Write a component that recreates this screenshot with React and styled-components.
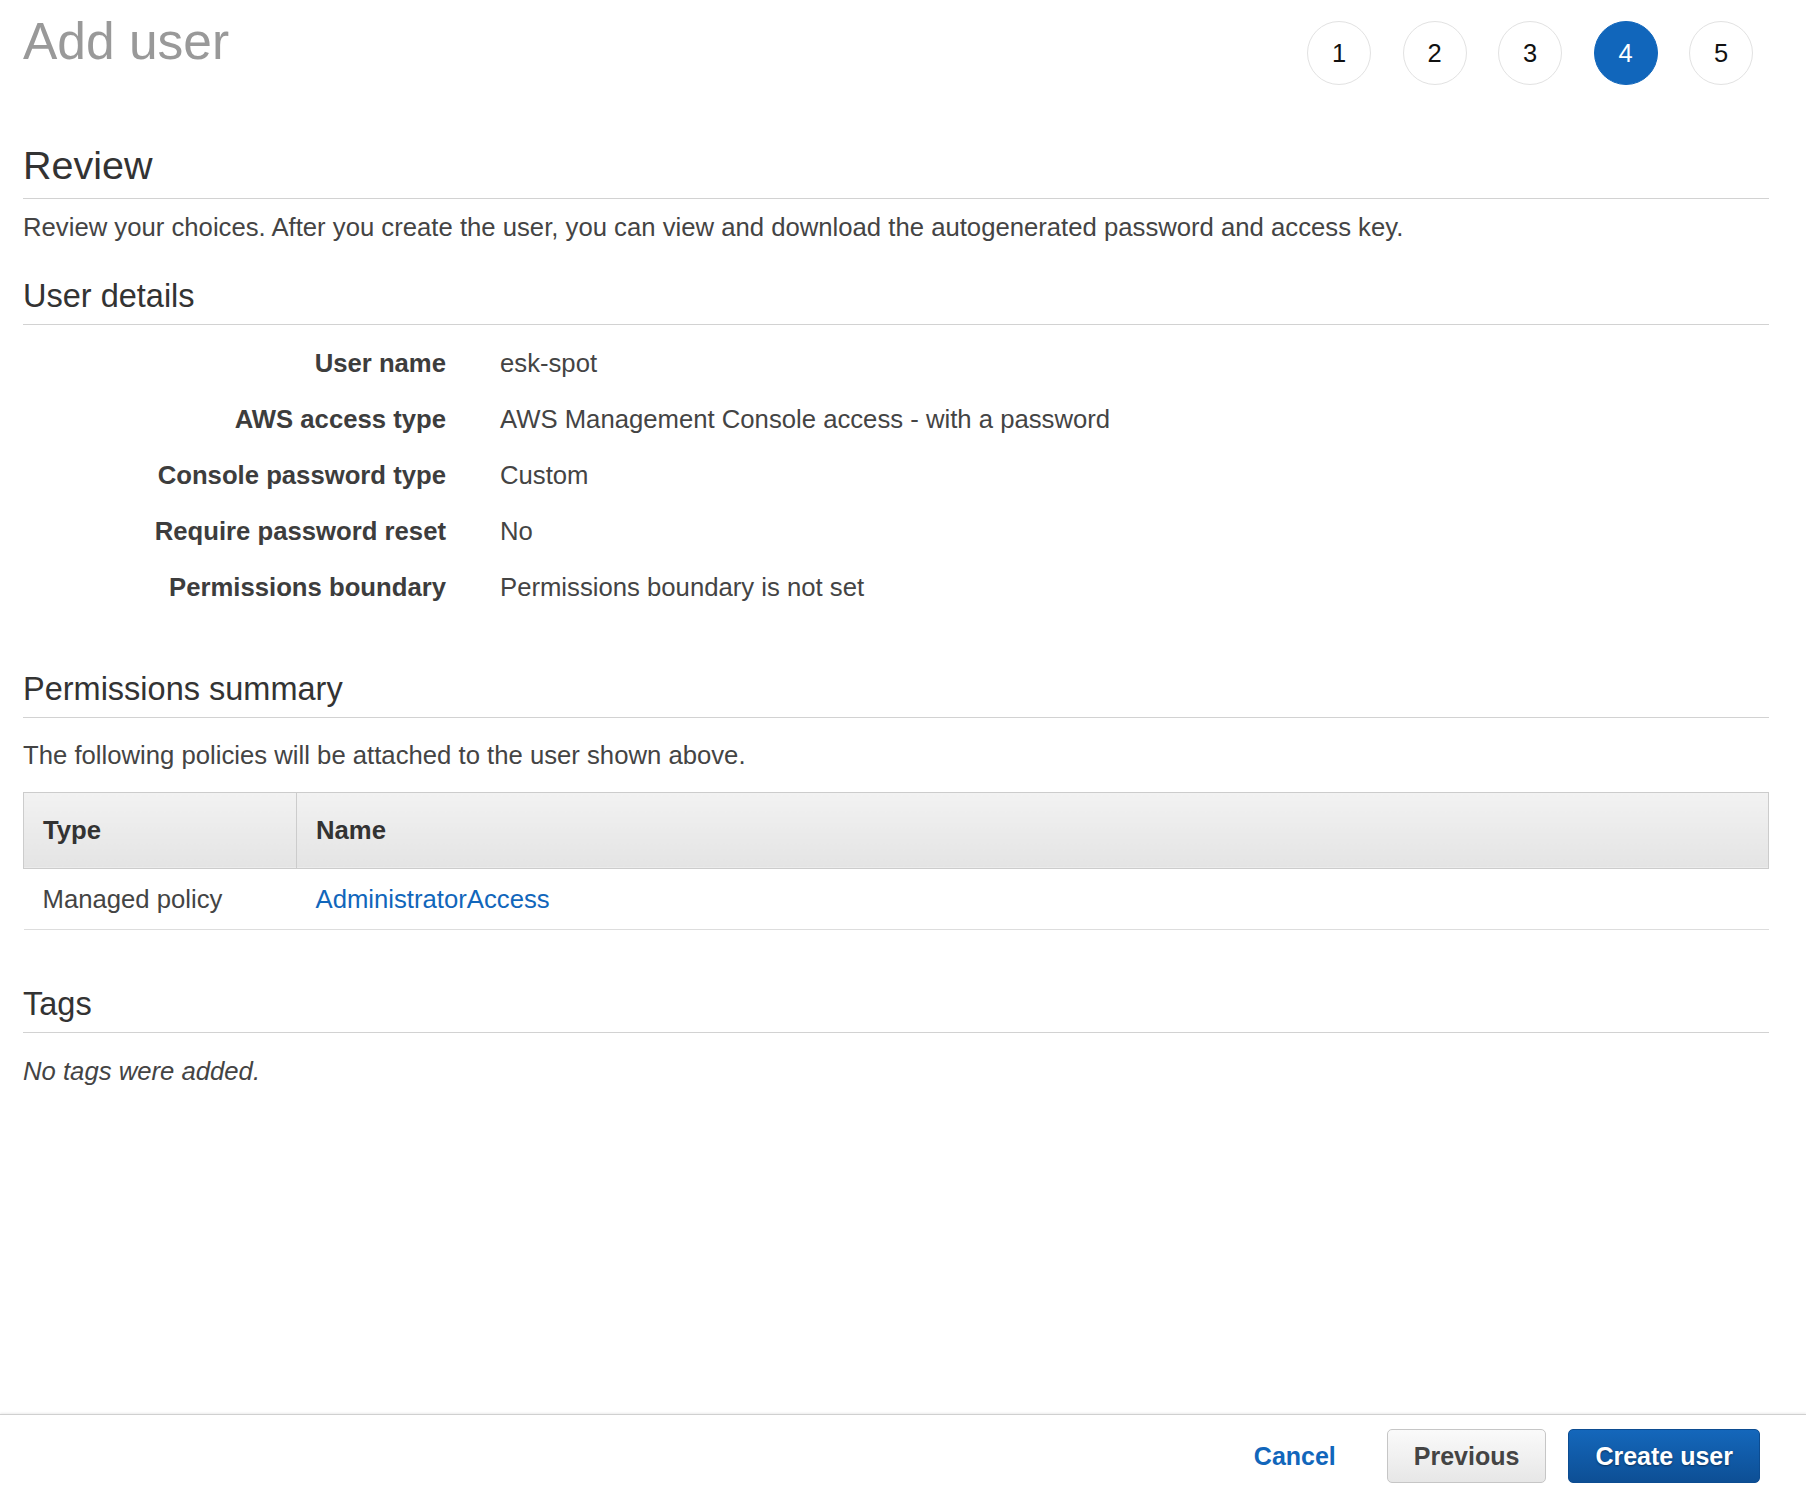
import React from 'react';
import styled, { createGlobalStyle } from 'styled-components';

const GlobalStyle = createGlobalStyle`
  html, body {
    margin: 0;
    padding: 0;
    background: #fff;
  }
  body {
    font-family: "Liberation Sans", Arial, Helvetica, sans-serif;
    color: #444;
  }
  * {
    box-sizing: border-box;
  }
`;

const steps = [1, 2, 3, 4, 5];
const current = 4;

const details = [
  ['User name', 'esk-spot'],
  ['AWS access type', 'AWS Management Console access - with a password'],
  ['Console password type', 'Custom'],
  ['Require password reset', 'No'],
  ['Permissions boundary', 'Permissions boundary is not set'],
];

const App = () => {
  return (
    <Page>
      <GlobalStyle />
      <Main>
        <Header>
          <Title>Add user</Title>
          <Steps>
            {steps.map((n) => (
              <Step key={n} $active={n === current}>{n}</Step>
            ))}
          </Steps>
        </Header>

        <SectionTitle $large $top={57}>Review</SectionTitle>
        <Text $top={10}>
          Review your choices. After you create the user, you can view and download the autogenerated password and access key.
        </Text>

        <SectionTitle $top={31}>User details</SectionTitle>
        <Details>
          {details.map(([label, value]) => (
            <React.Fragment key={label}>
              <Label>{label}</Label>
              <Value>{value}</Value>
            </React.Fragment>
          ))}
        </Details>

        <SectionTitle $top={54}>Permissions summary</SectionTitle>
        <Text $top={19}>The following policies will be attached to the user shown above.</Text>
        <Table>
          <thead>
            <tr>
              <Th $first>Type</Th>
              <Th>Name</Th>
            </tr>
          </thead>
          <tbody>
            <tr>
              <Td>Managed policy</Td>
              <Td><PolicyLink href="#">AdministratorAccess</PolicyLink></Td>
            </tr>
          </tbody>
        </Table>

        <SectionTitle $top={54}>Tags</SectionTitle>
        <Text $top={20} $italic>No tags were added.</Text>
      </Main>

      <Footer>
        <Button $variant="link">Cancel</Button>
        <Button>Previous</Button>
        <Button $variant="primary">Create user</Button>
      </Footer>
    </Page>
  );
};

const Page = styled.div`
  min-height: 100vh;
  display: flex;
  flex-direction: column;
`;

const Main = styled.main`
  flex: 1;
  padding: 0 37px 0 23px;
`;

const Header = styled.header`
  display: flex;
  justify-content: space-between;
  align-items: flex-start;
`;

const Title = styled.h1`
  margin: 11px 0 0;
  font-size: 51.5px;
  line-height: 60px;
  font-weight: 400;
  color: #999;
`;

const Steps = styled.ol`
  list-style: none;
  margin: 21px 16px 0 0;
  padding: 0;
  display: flex;
  gap: 31.5px;
`;

const Step = styled.li`
  width: 64px;
  height: 64px;
  border-radius: 50%;
  display: flex;
  align-items: center;
  justify-content: center;
  border: 1.5px solid ${({ $active }) => ($active ? '#1166bb' : '#e2e2e2')};
  background: ${({ $active }) => ($active ? '#1166bb' : '#fff')};
  color: ${({ $active }) => ($active ? '#fff' : '#111')};
  font-size: 25.5px;
`;

const SectionTitle = styled.h2`
  margin: ${({ $top }) => $top}px 0 0;
  padding-bottom: ${({ $large }) => ($large ? '9.5px' : '8px')};
  font-size: ${({ $large }) => ($large ? '39.5px' : '32.5px')};
  line-height: ${({ $large }) => ($large ? '46px' : '40px')};
  font-weight: 400;
  color: #333;
  border-bottom: 1px solid #d2d2d2;
`;

const Text = styled.p`
  margin: ${({ $top }) => $top}px 0 0;
  font-size: 25.7px;
  line-height: 36px;
  color: #444;
  font-style: ${({ $italic }) => ($italic ? 'italic' : 'normal')};
`;

const Details = styled.dl`
  margin: 10px 0 0;
  display: grid;
  grid-template-columns: 423px 1fr;
  column-gap: 54px;
  font-size: 25.7px;
  line-height: 36px;
`;

const Label = styled.dt`
  padding: 10px 0;
  text-align: right;
  font-weight: 700;
  color: #3d3d3d;
`;

const Value = styled.dd`
  margin: 0;
  padding: 10px 0;
  color: #444;
`;

const Table = styled.table`
  margin-top: 19px;
  width: 100%;
  border-collapse: collapse;
  font-size: 25.7px;
  line-height: 36px;
  color: #444;
`;

const Th = styled.th`
  width: ${({ $first }) => ($first ? '273px' : 'auto')};
  height: 76px;
  padding: 0 19px;
  text-align: left;
  font-weight: 700;
  color: #333;
  background: linear-gradient(#f2f2f2, #e4e4e4);
  border: 1px solid #cccccc;
`;

const Td = styled.td`
  height: 61px;
  padding: 0 19px;
  border-bottom: 1px solid #dddddd;
`;

const PolicyLink = styled.a`
  color: #1166bb;
  text-decoration: none;
`;

const Footer = styled.footer`
  display: flex;
  justify-content: flex-end;
  align-items: center;
  gap: 22px;
  padding: 14px 46px 9px;
  border-top: 1px solid #d0d0d0;
  box-shadow: 0 -1px 2px rgba(0, 0, 0, 0.08);
`;

const Button = styled.button`
  height: 54px;
  padding: 0 ${({ $variant }) => ($variant === 'link' ? '28px' : '26px')};
  border-radius: 5px;
  font-family: inherit;
  font-size: 25px;
  font-weight: 700;
  cursor: pointer;
  border: 1px solid
    ${({ $variant }) =>
      $variant === 'primary' ? '#0c4c91' : $variant === 'link' ? 'transparent' : '#c6c6c6'};
  background: ${({ $variant }) =>
    $variant === 'primary'
      ? 'linear-gradient(#1467bb, #0d4f95)'
      : $variant === 'link'
      ? 'transparent'
      : 'linear-gradient(#fafafa, #e7e7e7)'};
  color: ${({ $variant }) =>
    $variant === 'primary' ? '#fff' : $variant === 'link' ? '#1166bb' : '#444'};
  text-shadow: ${({ $variant }) =>
    $variant === 'primary' ? '0 1px 2px rgba(0, 0, 0, 0.45)' : 'none'};
`;

export default App;
